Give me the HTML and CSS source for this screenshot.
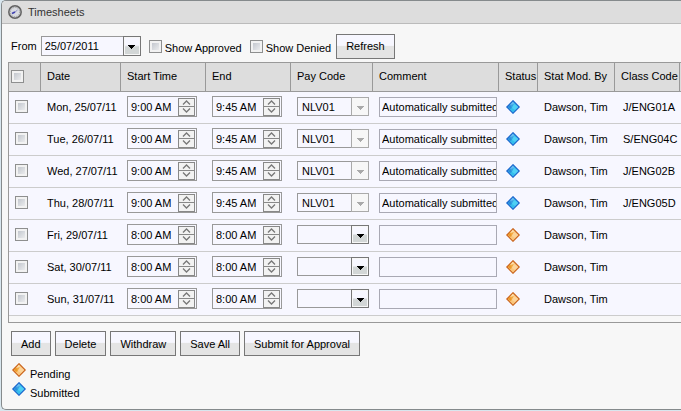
FILE: index.html
```
<!DOCTYPE html>
<html lang="en">
<head>
<meta charset="utf-8">
<title>Timesheets</title>
<link rel="stylesheet" href="styles.css">
</head>
<body>
<svg class="sprite" aria-hidden="true">
  <symbol id="gem-submitted" viewBox="0 0 14 14">
    <path d="M7 .5 13.5 7 7 13.5.5 7z" fill="#35bdec"/>
    <path d="M7 1 1 7h5l2-3z" fill="#3c9fe2"/>
    <path d="M8 4 6 8l3 2 4-3z" fill="#4fd0f4"/>
    <path d="M7 1 8 4 4 5z" fill="#6cc0f2"/>
    <path d="M4 5 6 8 4 9 2 7z" fill="#2a8edb"/>
    <path d="M7 .7 13.3 7 7 13.3.7 7z" fill="none" stroke="#1c62cc" stroke-width="1.1"/>
  </symbol>
  <symbol id="gem-pending" viewBox="0 0 14 14">
    <path d="M7 .5 13.5 7 7 13.5.5 7z" fill="#fac67c"/>
    <path d="M7 1 1 7h5l2-3z" fill="#f3a940"/>
    <path d="M8 4 6 8l3 2 4-3z" fill="#fcd49a"/>
    <path d="M7 1 8 4 4 5z" fill="#fde0b0"/>
    <path d="M4 5 6 8 4 9 2 7z" fill="#ee9a28"/>
    <path d="M7 .7 13.3 7 7 13.3.7 7z" fill="none" stroke="#c8601a" stroke-width="1.1"/>
  </symbol>
  <symbol id="arrow" viewBox="0 0 7 4"><path d="M0 0h7v1H6v1H5v1H4v1H3V3H2V2H1V1H0z" fill="currentColor"/></symbol>
  <symbol id="up" viewBox="0 0 9 5"><path d="M1 4.5 4.5 1 8 4.5" fill="none" stroke="#777" stroke-width="1.3"/></symbol>
  <symbol id="down" viewBox="0 0 9 5"><path d="M1 .5 4.5 4 8 .5" fill="none" stroke="#777" stroke-width="1.3"/></symbol>
</svg>
<section class="panel">
  <header class="titlebar">
    <svg class="clock" viewBox="0 0 14 14" aria-hidden="true">
      <circle cx="7" cy="7" r="6.2" fill="#c9cbce" stroke="#626262" stroke-width="1.5"/>
      <circle cx="7" cy="7" r="4.6" fill="#d9dbe0" stroke="#999" stroke-width="1" stroke-dasharray="1 1.4"/>
      <path d="M9.5 5 6.5 7.5" fill="none" stroke="#8a8cc8"/>
      <path d="M7 7 4 8.5" fill="none" stroke="#3f40b0" stroke-width="1.6"/>
    </svg>
    <h1>Timesheets</h1>
  </header>
  <form class="filters">
    <label for="from">From</label>
    <span class="combo combo-date">
      <select id="from"><option>25/07/2011</option></select>
      <span class="drop"><svg aria-hidden="true"><use href="#arrow"/></svg></span>
    </span>
    <label class="check"><input type="checkbox"><span>Show Approved</span></label>
    <label class="check"><input type="checkbox"><span>Show Denied</span></label>
    <button type="button">Refresh</button>
  </form>
  <div class="grid">
    <table>
      <colgroup>
        <col class="c-check"><col class="c-date"><col class="c-time"><col class="c-time"><col class="c-pay">
        <col class="c-comment"><col class="c-status"><col class="c-by"><col class="c-class"><col>
      </colgroup>
      <thead>
        <tr>
          <th><input type="checkbox" aria-label="Select all"></th>
          <th>Date</th><th>Start Time</th><th>End</th><th>Pay Code</th><th>Comment</th>
          <th>Status</th><th>Stat Mod. By</th><th>Class Code</th><th></th>
        </tr>
      </thead>
      <tbody id="rows"></tbody>
    </table>
  </div>
  <div class="actions">
    <button type="button">Add</button>
    <button type="button">Delete</button>
    <button type="button">Withdraw</button>
    <button type="button">Save All</button>
    <button type="button">Submit for Approval</button>
  </div>
  <ul class="legend">
    <li><svg class="gem" aria-hidden="true"><use href="#gem-pending"/></svg><span>Pending</span></li>
    <li><svg class="gem" aria-hidden="true"><use href="#gem-submitted"/></svg><span>Submitted</span></li>
  </ul>
</section>
<script src="app.js"></script>
</body>
</html>
```
FILE: styles.css
```
* { box-sizing: border-box; }
body {
  margin: 0;
  padding-left: 1px;
  background: #d8e6ee;
  color: #000;
  font: 11px/14px "Liberation Sans", Arial, sans-serif;
  overflow-x: hidden;
}
input, select, button { font: inherit; color: inherit; margin: 0; border-radius: 0; }
.sprite { display: none; }

.panel {
  border: 1px solid #858a8c;
  border-right: 0;
  border-radius: 5px 0 0 5px;
  background: #f7f7f7;
  overflow: hidden;
  padding-bottom: 8px;
}
.titlebar {
  display: flex;
  align-items: center;
  gap: 6px;
  height: 23px;
  padding-left: 6px;
  background: #ddd;
  border-bottom: 1px solid #bbb;
}
.titlebar h1 { margin: 0; font-size: 11px; font-weight: normal; color: #333; }
.clock { width: 14px; height: 14px; }

.filters {
  display: flex;
  align-items: center;
  gap: 4px;
  height: 38px;
  padding: 6px 9px 0;
}
.check { display: flex; align-items: center; gap: 3px; margin-left: 4px; }
.combo + .check { margin-left: 3px; }
.check span { padding-top: 4px; }
.filters button { margin-left: 1px; }

input[type="checkbox"] {
  appearance: none;
  display: block;
  width: 13px;
  height: 13px;
  border: 1px solid #8e8f8f;
  background: linear-gradient(135deg, #b8bdc6, #f6f6f6);
  box-shadow: inset 0 0 0 2px #f2f2f2;
}
button {
  height: 25px;
  padding: 0 9px;
  border: 1px solid #777;
  background: linear-gradient(#f7f7ff 45%, #e4e4e4 50%, #e4e4e4);
}

.combo {
  position: relative;
  display: block;
  width: 72px;
  height: 19px;
}
.combo-date { width: 100px; height: 20px; }
.filters .combo { margin-right: 1px; }
.combo select {
  appearance: none;
  display: block;
  width: 100%;
  height: 100%;
  padding: 0 18px 0 4px;
  border: 1px solid #999;
  background: #f7f7ff;
  opacity: 1;
  color: #000;
}
.combo-date select { padding-left: 3px; }
.drop {
  position: absolute;
  top: 0;
  right: 0;
  bottom: 0;
  width: 18px;
  display: flex;
  align-items: center;
  justify-content: center;
  padding-top: 2px;
  border: 1px solid #777;
  background: linear-gradient(#f7f7ff 45%, #d2d6d6 55%, #d2d6d6);
  box-shadow: inset 0 0 0 1px #f7f7f7;
  pointer-events: none;
}
.drop svg { width: 7px; height: 4px; }
select:disabled + .drop { border-color: #aaa; color: #aaa; background: #f7f7f7; }

.grid {
  margin-left: 6px;
  padding-bottom: 6px;
  border: 1px solid #999;
  border-right: 0;
}
table { width: 100%; table-layout: fixed; border-collapse: separate; border-spacing: 0; }
.c-check { width: 32px; }
.c-date { width: 80px; }
.c-time { width: 85px; }
.c-pay { width: 82px; }
.c-comment { width: 126px; }
.c-status { width: 39px; }
.c-by { width: 77px; }
.c-class { width: 65px; }
th {
  height: 29px;
  padding: 0 0 2px 6px;
  background: #ddd;
  border-right: 1px solid #999;
  border-bottom: 1px solid #999;
  font-weight: normal;
  text-align: left;
  white-space: nowrap;
}
th:first-child { padding-left: 2px; }
th:last-child { padding: 0; border-right: 0; }
td {
  height: 32px;
  padding: 0 0 2px 6px;
  background: #f7f7ff;
  border-bottom: 1px solid #ccc;
  white-space: nowrap;
}
td:last-child { padding: 0; }
.status { padding-left: 7px; }
.class-code { padding-left: 8px; }

.time {
  display: flex;
  align-items: center;
  width: 70px;
  height: 21px;
  padding-right: 1px;
  border: 1px solid #999;
}
.time input {
  flex: 1;
  min-width: 0;
  padding: 0 0 0 3px;
  border: 0;
  background: transparent;
}
.spin {
  display: flex;
  flex-direction: column;
  width: 17px;
  height: 18px;
  border: 1px solid #888;
  background: #f2f2f2;
}
.spin button {
  flex: 1;
  display: flex;
  align-items: center;
  justify-content: center;
  min-height: 0;
  height: auto;
  padding: 0;
  border: 0;
  background: none;
}
.spin button + button { border-top: 1px solid #888; }
.spin svg { width: 9px; height: 5px; }
.comment {
  display: block;
  width: 118px;
  height: 20px;
  padding: 0 0 0 2px;
  border: 1px solid #a9a9b4;
  background: #f7f7ff;
}
.gem { display: block; width: 14px; height: 14px; }

.actions { display: flex; flex-wrap: wrap; gap: 4px; padding: 8px 9px 0; }
.legend { list-style: none; margin: 0; padding: 7px 10px 0; }
.legend li { display: flex; align-items: flex-start; gap: 4px; height: 19px; }
.legend span { padding-top: 4px; }
```
FILE: app.js
```
const entries = [
  ["Mon, 25/07/11", "9:00 AM", "9:45 AM", "J/ENG01A"],
  ["Tue, 26/07/11", "9:00 AM", "9:45 AM", "S/ENG04C"],
  ["Wed, 27/07/11", "9:00 AM", "9:45 AM", "J/ENG02B"],
  ["Thu, 28/07/11", "9:00 AM", "9:45 AM", "J/ENG05D"],
  ["Fri, 29/07/11", "8:00 AM", "8:00 AM", ""],
  ["Sat, 30/07/11", "8:00 AM", "8:00 AM", ""],
  ["Sun, 31/07/11", "8:00 AM", "8:00 AM", ""]
];

const time = (value, label) => `
  <div class="time">
    <input type="text" value="${value}" aria-label="${label}">
    <span class="spin">
      <button type="button" aria-label="Later"><svg><use href="#up"/></svg></button>
      <button type="button" aria-label="Earlier"><svg><use href="#down"/></svg></button>
    </span>
  </div>`;

document.getElementById("rows").innerHTML = entries.map(([date, start, end, code]) => `
  <tr>
    <td><input type="checkbox" aria-label="Select ${date}"></td>
    <td>${date}</td>
    <td>${time(start, "Start time")}</td>
    <td>${time(end, "End time")}</td>
    <td><span class="combo">
      <select aria-label="Pay code" ${code ? "disabled" : ""}><option>${code ? "NLV01" : ""}</option></select>
      <span class="drop"><svg><use href="#arrow"/></svg></span>
    </span></td>
    <td><input class="comment" type="text" aria-label="Comment" value="${code ? "Automatically submitted" : ""}"></td>
    <td class="status"><svg class="gem" role="img"><use href="#gem-${code ? "submitted" : "pending"}"/></svg></td>
    <td>Dawson, Tim</td>
    <td class="class-code">${code}</td>
    <td></td>
  </tr>`).join("");
```
